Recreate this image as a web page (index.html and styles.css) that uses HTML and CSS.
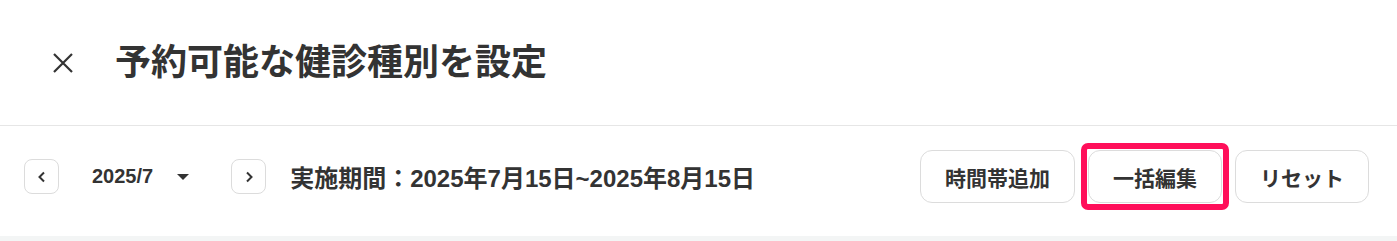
FILE: index.html
```html
<!DOCTYPE html>
<html lang="ja">
<head>
<meta charset="utf-8">
<title>予約可能な健診種別を設定</title>
<link rel="stylesheet" href="styles.css">
</head>
<body>
<div class="panel">
  <header class="header">
    <button class="close" aria-label="閉じる">
      <svg width="20" height="20" viewBox="0 0 20 20"><path d="M1 1L19 19M19 1L1 19" stroke="#333" stroke-width="2.2" fill="none"/></svg>
    </button>
    <h1 class="title">予約可能な健診種別を設定</h1>
  </header>
  <div class="toolbar">
    <div class="left">
      <button class="nav" aria-label="前月">
        <svg width="10" height="12" viewBox="0 0 10 12"><path d="M7 1.5L2.5 6L7 10.5" stroke="#333" stroke-width="2" fill="none"/></svg>
      </button>
      <div class="month">
        <span class="month-text">2025/7</span>
        <span class="caret"></span>
      </div>
      <button class="nav" aria-label="翌月">
        <svg width="10" height="12" viewBox="0 0 10 12"><path d="M3 1.5L7.5 6L3 10.5" stroke="#333" stroke-width="2" fill="none"/></svg>
      </button>
      <div class="period">実施期間：2025年7月15日~2025年8月15日</div>
    </div>
    <div class="actions">
      <button class="btn">時間帯追加</button>
      <button class="btn highlighted">一括編集<span class="mark"></span></button>
      <button class="btn">リセット</button>
    </div>
  </div>
</div>
</body>
</html>
```

FILE: styles.css
```css
html, body {
  margin: 0;
  padding: 0;
}
body {
  background: #f3f5f5;
  font-family: "Liberation Sans", "Noto Sans CJK JP", sans-serif;
  color: #333;
  width: 1397px;
  height: 241px;
  overflow: hidden;
}
.panel {
  background: #fff;
}
.header {
  height: 125px;
  border-bottom: 1px solid #e6e6e6;
  display: flex;
  align-items: center;
  padding-left: 53px;
}
.close {
  border: 0;
  background: none;
  padding: 0;
  width: 20px;
  height: 20px;
  display: flex;
  margin-top: 1px;
}
.title {
  margin: 0 0 0 42px;
  font-size: 36px;
  font-weight: 700;
  line-height: 1;
  color: #333;
}
.toolbar {
  height: 110px;
  box-sizing: border-box;
  padding: 24px 28px 33px 24px;
  display: flex;
  align-items: center;
  justify-content: space-between;
}
.left {
  display: flex;
  align-items: center;
}
.nav {
  width: 35px;
  height: 35px;
  box-sizing: border-box;
  border: 1px solid #dcdcdc;
  border-radius: 8px;
  background: #fff;
  padding: 0;
  display: flex;
  align-items: center;
  justify-content: center;
}
.month {
  display: flex;
  align-items: center;
  margin: 0 42px 0 33px;
}
.month-text {
  font-size: 20px;
  font-weight: 700;
}
.caret {
  margin-left: 24px;
  width: 0;
  height: 0;
  border-left: 6px solid transparent;
  border-right: 6px solid transparent;
  border-top: 6px solid #333;
}
.period {
  margin-left: 24px;
  font-size: 24px;
  font-weight: 700;
}
.actions {
  display: flex;
  align-items: center;
  gap: 13px;
}
.btn {
  position: relative;
  height: 53px;
  box-sizing: border-box;
  padding: 0 24px;
  border: 1px solid #dcdcdc;
  border-radius: 12px;
  background: #fff;
  font-family: inherit;
  font-size: 21px;
  font-weight: 700;
  color: #333;
}
.mark {
  position: absolute;
  inset: -8px;
  border: 6px solid #ff0f5a;
  border-radius: 7px;
  pointer-events: none;
}
```
